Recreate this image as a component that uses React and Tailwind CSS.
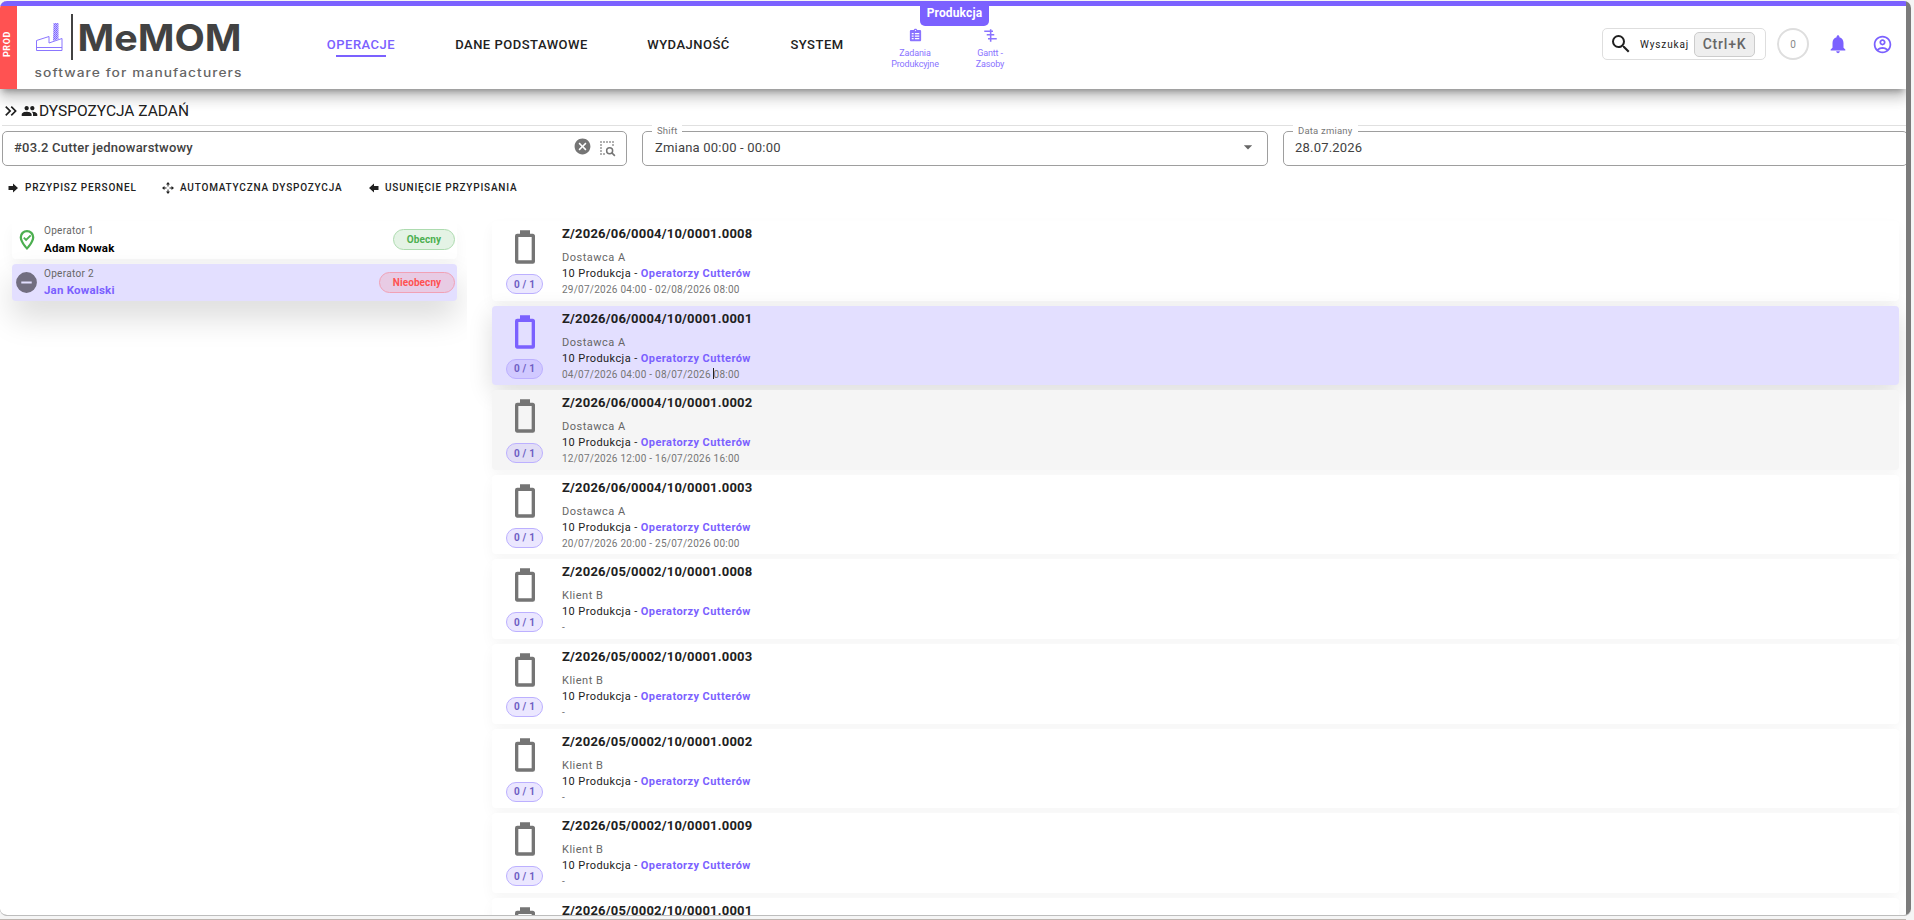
import React from 'react';
import {
  MdKeyboardDoubleArrowRight,
  MdGroup,
  MdSearch,
  MdNotifications,
  MdOutlineAccountCircle,
  MdCancel,
  MdArrowDropDown,
} from 'react-icons/md';

const NAV = [
  { label: 'OPERACJE', className: 'w-[68px] text-[#7b61ff]', active: true },
  { label: 'DANE PODSTAWOWE', className: 'ml-[60px] w-[133px]' },
  { label: 'WYDAJNOŚĆ', className: 'ml-[59px] w-[83px]' },
  { label: 'SYSTEM', className: 'ml-[60px] w-[54px]' },
];

const TASKS = [
  { no: 'Z/2026/06/0004/10/0001.0008', client: 'Dostawca A', dates: '29/07/2026 04:00 - 02/08/2026 08:00' },
  { no: 'Z/2026/06/0004/10/0001.0001', client: 'Dostawca A', dates: '04/07/2026 04:00 - 08/07/2026 08:00', state: 'selected' },
  { no: 'Z/2026/06/0004/10/0001.0002', client: 'Dostawca A', dates: '12/07/2026 12:00 - 16/07/2026 16:00', state: 'hover' },
  { no: 'Z/2026/06/0004/10/0001.0003', client: 'Dostawca A', dates: '20/07/2026 20:00 - 25/07/2026 00:00' },
  { no: 'Z/2026/05/0002/10/0001.0008', client: 'Klient B', dates: '-' },
  { no: 'Z/2026/05/0002/10/0001.0003', client: 'Klient B', dates: '-' },
  { no: 'Z/2026/05/0002/10/0001.0002', client: 'Klient B', dates: '-' },
  { no: 'Z/2026/05/0002/10/0001.0009', client: 'Klient B', dates: '-' },
  { no: 'Z/2026/05/0002/10/0001.0001', client: 'Klient B', dates: '-' },
];

function Icon({ className, children }) {
  return (
    <svg viewBox="0 0 24 24" fill="currentColor" className={`shrink-0 ${className}`}>
      {children}
    </svg>
  );
}

function Logo() {
  return (
    <svg width="212" height="70" viewBox="0 0 212 70" className="shrink-0">
      <defs>
        <pattern id="bricks" width="2" height="2" patternUnits="userSpaceOnUse">
          <rect width="2" height="2" fill="#c4bbff" />
          <rect width="1" height="1" fill="#7b61ff" />
          <rect x="1" y="1" width="1" height="1" fill="#8b76ff" />
        </pattern>
      </defs>
      {/* factory */}
      <path d="M19.500 9H24.500V25L19 27Z" fill="url(#bricks)" />
      <path d="M2.500 36.500V26.500L15 22.500V29L28 24.500V36.500Z" fill="none" stroke="#8b76ff" />
      <path d="M2 33.500H28" stroke="#8b76ff" />
      <rect x="37" y="0" width="2" height="46" fill="#424242" />
      <text x="43.500" y="36.500" textLength="164" lengthAdjust="spacingAndGlyphs" className="fill-[#424242] font-['Inter'] text-[37px] font-bold">
        MeMOM
      </text>
      <text
        x="0.500"
        y="62.500"
        textLength="208"
        lengthAdjust="spacingAndGlyphs"
        className="fill-[#666] font-['Inter'] text-[11.500px] font-medium tracking-[0.9px]"
      >
        software for manufacturers
      </text>
    </svg>
  );
}

function Shortcut({ className, children, lines }) {
  return (
    <div className={`flex flex-col items-center whitespace-nowrap text-[9px] leading-[11px] tracking-[-0.15px] text-[#8a73ff] ${className}`}>
      {children}
      <span className="mt-[5px]">{lines[0]}</span>
      <span>{lines[1]}</span>
    </div>
  );
}

function Header() {
  return (
    <header className="relative z-10 flex h-[83px] bg-white shadow-[0_5px_6px_-3px_rgba(0,0,0,0.3),0_9px_12px_1px_rgba(0,0,0,0.14),0_3px_16px_2px_rgba(0,0,0,0.12)]">
      <div className="flex w-[17px] items-center justify-center bg-[#ff5252]">
        <span className="-translate-x-[1px] translate-y-[-3px] rotate-180 text-[9px] font-bold tracking-[0.6px] text-white [writing-mode:vertical-rl]">PROD</span>
      </div>
      <div className="ml-[17px] mt-[8px] w-[212px]">
        <Logo />
      </div>
      <nav className="ml-[81px] flex h-[34px] items-start pt-[29px] text-[13px] font-medium leading-[20px] tracking-[0.5px]">
        {NAV.map((item) => (
          <div key={item.label} className={`flex shrink-0 flex-col items-center whitespace-nowrap ${item.className}`}>
            <span>{item.label}</span>
            {item.active && <div className="h-[2px] w-[50px] bg-[#7b61ff]" />}
          </div>
        ))}
      </nav>
      <div className="relative ml-[46px] flex w-[120px] shrink-0 pt-[22px]">
        <div className="absolute left-[30px] top-0 flex h-[20px] w-[69px] justify-center rounded-b-[5px] bg-[#7b61ff] text-[12px] font-bold leading-[15px] tracking-[0.15px] text-white">
          Produkcja
        </div>
        <Shortcut lines={['Zadania', 'Produkcyjne']} className="w-[50px]">
          <Icon className="h-[15px] w-[15px]">
            <path
              d="M19 3H14.800C14.400 1.800 13.300 1 12 1S9.600 1.800 9.200 3H5C3.900 3 3 3.900 3 5V19C3 20.100 3.900 21 5 21H19C20.100 21 21 20.100 21 19V5C21 3.900 20.100 3 19 3M12 3A1 1 0 0 1 12 5A1 1 0 0 1 12 3M6 8H9V10H6ZM6 12H9V14H6ZM6 16H9V18H6ZM11 8H18V10H11ZM11 12H18V14H11ZM11 16H18V18H11Z"
              fillRule="evenodd"
            />
          </Icon>
        </Shortcut>
        <Shortcut lines={['Gantt -', 'Zasoby']} className="ml-[34px] w-[32px]">
          <Icon className="h-[15px] w-[15px]">
            <path d="M11 2H13.500V22H11ZM2 4H16V6.500H2ZM6 9.500H18V12H6ZM13 16H22V18.500H13ZM8 16H11V18.500H8Z" />
          </Icon>
        </Shortcut>
      </div>
      <div className="ml-auto mr-[13px] flex h-[76px] items-center">
        <div className="flex h-[32px] w-[164px] items-center rounded-[5px] border border-[#dedede] pl-[6px]">
          <MdSearch className="h-[24px] w-[24px] shrink-0 text-[#212121]" />
          <span className="ml-[7px] w-[50px] whitespace-nowrap text-[10px] tracking-[0.85px]">Wyszukaj</span>
          <kbd className="ml-[4px] flex h-[25px] w-[61px] items-center justify-center rounded-[5px] border border-[#ccc] bg-[#eee] font-['Roboto'] text-[14px] font-medium tracking-[0.8px] text-[#666]">
            Ctrl+K
          </kbd>
        </div>
        <div className="ml-[11px] flex h-[32px] w-[32px] items-center justify-center rounded-full border-2 border-[#dedede] text-[10px] text-[#888]">0</div>
        <MdNotifications className="ml-[18px] h-[22px] w-[22px] text-[#7b61ff]" />
        <MdOutlineAccountCircle className="ml-[23px] h-[21px] w-[21px] text-[#7b61ff]" />
      </div>
    </header>
  );
}

function Field({ label, labelWidth, className, children }) {
  return (
    <div className={`relative flex h-[35px] shrink-0 items-center rounded-[5px] border border-[#9e9e9e] pb-[1px] pl-[11px] text-[13px] tracking-[0.2px] text-[#424242] ${className}`}>
      {label && (
        <span className={`absolute -top-[8px] left-[9px] whitespace-nowrap bg-white pl-[5px] text-[9.5px] leading-[14px] tracking-[0.2px] text-[#777] ${labelWidth}`}>{label}</span>
      )}
      {children}
    </div>
  );
}

function Filters() {
  return (
    <div className="mt-[5px] flex gap-[15px] pl-[2px]">
      <Field className="w-[625px]">
        <span className="font-medium">#03.2 Cutter jednowarstwowy</span>
        <MdCancel className="mb-[3px] ml-auto h-[19px] w-[19px] text-[#757575]" />
        <Icon className="ml-[6px] mr-[10px] h-[18px] w-[18px] text-[#757575]">
          <path d="M3 3H5V5H3ZM7 3H9V5H7ZM11 3H13V5H11ZM15 3H17V5H15ZM19 3H21V5H19ZM3 7H5V9H3ZM19 7H21V9H19ZM3 11H5V13H3ZM3 15H5V17H3ZM3 19H5V21H3ZM7 19H9V21H7Z" />
          <circle cx="15.500" cy="15.500" r="4" fill="none" stroke="currentColor" strokeWidth="2" />
          <path d="M18 18L22.500 22.500" stroke="currentColor" strokeWidth="2.200" />
        </Icon>
      </Field>
      <Field label="Shift" labelWidth="w-[30px]" className="w-[626px]">
        <span className="ml-[1px]">Zmiana 00:00 - 00:00</span>
        <MdArrowDropDown className="mb-[2px] ml-auto mr-[9px] h-[20px] w-[20px] text-[#666]" />
      </Field>
      <Field label="Data zmiany" labelWidth="w-[65px]" className="w-[625px]">
        <span>28.07.2026</span>
      </Field>
    </div>
  );
}

function Actions() {
  return (
    <div className="flex h-[43px] items-center pl-[7px] text-[10px] font-medium tracking-[0.8px] text-[#212121]">
      <Icon className="h-[12px] w-[12px]">
        <path d="M3 8H12V3L22 12L12 21V16H3Z" />
      </Icon>
      <span className="ml-[6px] w-[112px] whitespace-nowrap">PRZYPISZ PERSONEL</span>
      <Icon className="ml-[25px] h-[12px] w-[12px]">
        <path d="M12 0L16 5H13V9H11V5H8ZM12 24L8 19H11V15H13V19H16ZM0 12L5 8V11H9V13H5V16ZM24 12L19 16V13H15V11H19V8Z" />
      </Icon>
      <span className="ml-[6px] w-[163px] whitespace-nowrap">AUTOMATYCZNA DYSPOZYCJA</span>
      <Icon className="ml-[25px] h-[12px] w-[12px]">
        <path d="M21 8H12V3L2 12L12 21V16H21Z" />
      </Icon>
      <span className="ml-[5px] whitespace-nowrap">USUNIĘCIE PRZYPISANIA</span>
    </div>
  );
}

function Operators() {
  return (
    <div className="flex h-[140px] w-[467px] shrink-0 flex-col overflow-hidden pl-[12px] pt-[8px]">
      <div className="flex h-[38px] w-[445px] shrink-0 items-center rounded-[4px] bg-white pb-[1px] pr-[2px] shadow-[0_8px_14px_rgba(0,0,0,0.04)]">
        <Icon className="ml-[4px] h-[22px] w-[22px] text-[#4caf50]">
          <path d="M12 1A8 8 0 0 1 20 9C20 15 12 23 12 23C12 23 4 15 4 9A8 8 0 0 1 12 1M12 3.500A5.500 5.500 0 0 0 6.500 9C6.500 11 8 15 12 19.500C16 15 17.500 11 17.500 9A5.500 5.500 0 0 0 12 3.500Z" />
          <path d="M8.500 9.500L11 12L16 7" fill="none" stroke="currentColor" strokeWidth="2" />
        </Icon>
        <div className="ml-[6px] flex flex-col">
          <span className="text-[10px] leading-[14px] tracking-[0.3px] text-[#666]">Operator 1</span>
          <span className="mt-[3px] text-[11.500px] font-bold leading-[14px] tracking-[0.2px] text-black">Adam Nowak</span>
        </div>
        <span className="ml-auto flex h-[21px] w-[62px] items-center justify-center rounded-full border border-[#addbaf] bg-[#e4f3e5] text-[10px] font-bold tracking-[0.1px] text-[#4caf50]">
          Obecny
        </span>
      </div>
      <div className="mt-[5px] flex h-[37px] w-[445px] shrink-0 items-center rounded-[4px] bg-[#e3dfff] pr-[2px] shadow-[0_16px_32px_rgba(0,0,0,0.15)]">
        <Icon className="ml-[2px] h-[25px] w-[25px] text-[#726e80]">
          <path d="M17 13H7V11H17M12 2A10 10 0 1 0 12 22A10 10 0 1 0 12 2Z" fillRule="evenodd" />
        </Icon>
        <div className="ml-[5px] flex flex-col pb-[1px]">
          <span className="text-[10px] leading-[14px] tracking-[0.3px] text-[#666]">Operator 2</span>
          <span className="mt-[2px] text-[11.500px] font-bold leading-[14px] tracking-[0.2px] text-[#7b61ff]">Jan Kowalski</span>
        </div>
        <span className="ml-auto flex h-[21px] w-[76px] items-center justify-center rounded-full border border-[#f1a1b5] bg-[#e8cbe4] text-[10px] font-bold tracking-[0.1px] text-[#ff5252]">
          Nieobecny
        </span>
      </div>
    </div>
  );
}

const CARD_STYLES = {
  selected: 'bg-[#e3dfff] shadow-[0_8px_24px_rgba(0,0,0,0.14)]',
  hover: 'bg-[#f5f5f5] shadow-[0_6px_14px_rgba(0,0,0,0.04)]',
};

function Task({ task }) {
  const selected = task.state === 'selected';
  return (
    <div className={`flex h-[79.600px] w-[1407px] shrink-0 rounded-[4px] ${CARD_STYLES[task.state] || 'bg-white shadow-[0_6px_14px_rgba(0,0,0,0.04)]'}`}>
      <div className="ml-[12px] flex w-[41px] flex-col items-center pt-[6px]">
        <Icon className={`h-[40px] w-[40px] ${selected ? 'text-[#7b61ff]' : 'text-[#757575]'}`}>
          <path d="M16 20H8V6H16M16.670 4H15V2H9V4H7.330A1.330 1.330 0 0 0 6 5.330V20.670C6 21.400 6.600 22 7.330 22H16.670A1.330 1.330 0 0 0 18 20.670V5.330C18 4.600 17.400 4 16.670 4Z" />
        </Icon>
        <span className={`mt-[7px] flex h-[20px] w-[37px] items-center justify-center rounded-full border border-[#bcb0ff] text-[10px] font-bold tracking-[0.2px] text-[#6f5fc4] ${selected ? 'bg-[#d1c9ff]' : 'bg-[#7b61ff]/15'}`}>
          0 / 1
        </span>
      </div>
      <div className="ml-[17px] whitespace-nowrap">
        <div className="mt-[4px] text-[13px] font-bold leading-[18px] tracking-[0.2px] text-[#212121]">{task.no}</div>
        <div className="mt-[7px] text-[11px] leading-[15px] tracking-[0.5px] text-[#666]">{task.client}</div>
        <div className="mt-[1px] text-[11px] leading-[16px] tracking-[0.42px] text-[#212121]">
          10 Produkcja - <b className="font-bold text-[#7b61ff]">Operatorzy Cutterów</b>
        </div>
        <div className="relative text-[10px] leading-[15px] tracking-[0.25px] text-[#757575]">
          {task.dates}
          {selected && <span className="absolute left-[151px] top-[1px] h-[11px] w-px bg-[#212121]" />}
        </div>
      </div>
    </div>
  );
}

export default function App() {
  return (
    <div className="h-[920px] w-[1914px] overflow-hidden bg-[#f5f5f5] font-['Roboto',sans-serif] text-[#212121]">
      <div className="mt-px flex h-[915px] w-[1911px] overflow-hidden rounded-[7px] border-b border-[#bdbdbd] bg-[#7b7b7b]">
        <div className="w-[1906px] shrink-0 overflow-hidden border-t-[5px] border-[#7b61ff] bg-white">
          <Header />
          <div className="ml-[2px] flex h-[37px] items-center border-b border-[#e0e0e0] pt-[7px]">
            <MdKeyboardDoubleArrowRight className="-ml-[1px] h-[20px] w-[20px]" />
            <MdGroup className="h-[18px] w-[17px]" />
            <h1 className="ml-[1px] text-[15.500px] leading-[20px]">DYSPOZYCJA ZADAŃ</h1>
          </div>
          <Filters />
          <Actions />
          <main className="mt-[4px] flex">
            <Operators />
            <section className="flex flex-col gap-[5px] pl-[25px] pt-[8px]">
              {TASKS.map((task) => (
                <Task key={task.no} task={task} />
              ))}
            </section>
          </main>
        </div>
      </div>
      <div className="mt-[3px] h-px w-[1906px] bg-[#bdb5b0]" />
    </div>
  );
}
